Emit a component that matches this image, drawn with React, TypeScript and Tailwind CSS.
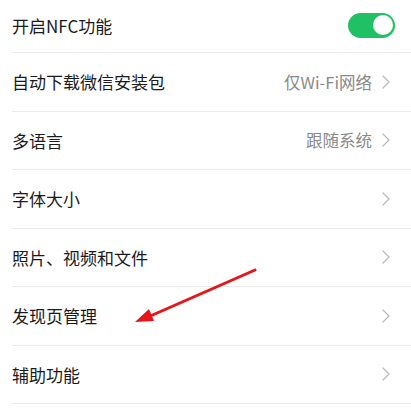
import { ChevronRight } from 'lucide-react';

type Row = { label: string; value?: string; toggle?: boolean };

const rows: Row[] = [
  { label: '开启NFC功能', toggle: true },
  { label: '自动下载微信安装包', value: '仅Wi-Fi网络' },
  { label: '多语言', value: '跟随系统' },
  { label: '字体大小' },
  { label: '照片、视频和文件' },
  { label: '发现页管理' },
  { label: '辅助功能' },
];

const font = { fontFamily: '"Noto Sans CJK SC", "Noto Sans", sans-serif' };

const Toggle = () => (
  <div className="w-[47px] h-[25px] rounded-full bg-[#20c065] flex items-center justify-end pr-[2.5px]">
    <div className="w-[20px] h-[20px] rounded-full bg-white" />
  </div>
);

export default function App() {
  return (
    <div className="relative w-[411px] h-[408px] bg-white overflow-hidden" style={font}>
      {rows.map((row, i) => (
        <div
          key={row.label}
          className={`ml-3 flex items-center border-b border-[#ebebeb] ${i === 0 ? 'h-[53px] pb-[2px]' : 'h-[58.5px]'}`}
        >
          <span className="flex-1 text-[17px] text-[#1b1b1b] leading-none">{row.label}</span>
          {row.toggle ? (
            <div className="mr-[16px]">
              <Toggle />
            </div>
          ) : (
            <div className="flex items-center mr-[13px]">
              {row.value && (
                <span className="text-[16.5px] text-[#8a8a8a] leading-none mr-[2px]">{row.value}</span>
              )}
              <ChevronRight className="w-[24px] h-[24px] text-[#b8b8b8]" strokeWidth={1.2} />
            </div>
          )}
        </div>
      ))}

      {/* red annotation arrow */}
      <svg className="absolute left-0 top-0 pointer-events-none" width="411" height="408" viewBox="0 0 411 408">
        <line x1="255" y1="270" x2="148" y2="317" stroke="#e8141a" strokeWidth="3" strokeLinecap="round" />
        <polygon points="135,322 149,309 154,321" fill="#e8141a" />
      </svg>
    </div>
  );
}
